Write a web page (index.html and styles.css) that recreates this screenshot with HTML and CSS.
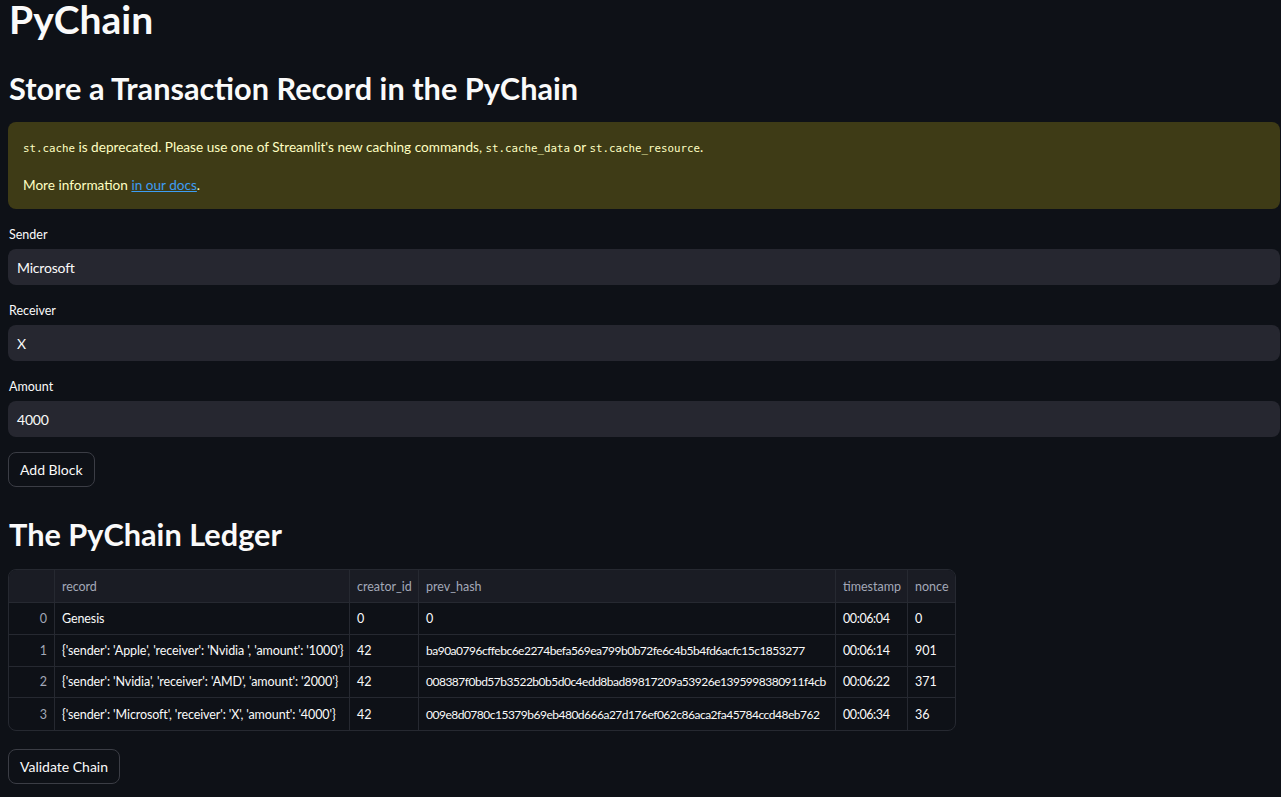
FILE: index.html
```html
<!DOCTYPE html>
<html lang="en">
<head>
<meta charset="utf-8">
<title>PyChain</title>
<link rel="stylesheet" href="styles.css">
</head>
<body>
<main class="main">
  <h1 class="title">PyChain</h1>
  <h2 class="header">Store a Transaction Record in the PyChain</h2>
  <div class="alert">
    <p><code>st.cache</code> is deprecated. Please use one of Streamlit's new caching commands, <code>st.cache_data</code> or <code>st.cache_resource</code>.</p>
    <p>More information <a href="#">in our docs</a>.</p>
  </div>
  <div class="field">
    <label class="label">Sender</label>
    <div class="input">Microsoft</div>
  </div>
  <div class="field">
    <label class="label">Receiver</label>
    <div class="input">X</div>
  </div>
  <div class="field">
    <label class="label">Amount</label>
    <div class="input">4000</div>
  </div>
  <button class="btn">Add Block</button>
  <h2 class="header ledger">The PyChain Ledger</h2>
  <div class="grid">
    <div class="row head">
      <div class="c idx"></div><div class="c rec">record</div><div class="c cid">creator_id</div><div class="c ph">prev_hash</div><div class="c ts">timestamp</div><div class="c no">nonce</div>
    </div>
    <div class="row">
      <div class="c idx">0</div><div class="c rec">Genesis</div><div class="c cid">0</div><div class="c ph">0</div><div class="c ts">00:06:04</div><div class="c no">0</div>
    </div>
    <div class="row">
      <div class="c idx">1</div><div class="c rec">{'sender': 'Apple', 'receiver': 'Nvidia ', 'amount': '1000'}</div><div class="c cid">42</div><div class="c ph hash">ba90a0796cffebc6e2274befa569ea799b0b72fe6c4b5b4fd6acfc15c1853277</div><div class="c ts">00:06:14</div><div class="c no">901</div>
    </div>
    <div class="row">
      <div class="c idx">2</div><div class="c rec">{'sender': 'Nvidia', 'receiver': 'AMD', 'amount': '2000'}</div><div class="c cid">42</div><div class="c ph hash">008387f0bd57b3522b0b5d0c4edd8bad89817209a53926e1395998380911f4cb</div><div class="c ts">00:06:22</div><div class="c no">371</div>
    </div>
    <div class="row last">
      <div class="c idx">3</div><div class="c rec">{'sender': 'Microsoft', 'receiver': 'X', 'amount': '4000'}</div><div class="c cid">42</div><div class="c ph hash">009e8d0780c15379b69eb480d666a27d176ef062c86aca2fa45784ccd48eb762</div><div class="c ts">00:06:34</div><div class="c no">36</div>
    </div>
  </div>
  <button class="btn validate">Validate Chain</button>
</main>
</body>
</html>
```

FILE: styles.css
```css
* { box-sizing: border-box; }
html, body { margin: 0; padding: 0; background: #0e1117; }
body {
  font-family: "Lato", "Noto Sans", sans-serif;
  color: #fafafa;
  width: 1281px;
  height: 797px;
  overflow: hidden;
}
.main {
  padding: 0 1px 0 8px;
  display: flex;
  flex-direction: column;
  align-items: flex-start;
}
.title {
  margin: 0 0 0 1px;
  font-size: 39px;
  font-weight: 700;
  line-height: 38px;
}
.header {
  margin: 31px 0 0 1px;
  font-size: 30.7px;
  font-weight: 700;
  line-height: 40px;
}
.alert {
  margin-top: 13px;
  width: 100%;
  background: #3e3b16;
  border-radius: 8px;
  padding: 13px 15px 12px;
  color: #ffffc2;
  font-size: 13.6px;
}
.alert p { margin: 0; line-height: 24px; }
.alert p + p { margin-top: 12px; }
.alert code {
  font-family: "DejaVu Sans Mono", monospace;
  font-size: 10.8px;
  color: #ffffc2;
}
.alert a { color: #3d9df3; }
.field { width: 100%; margin-top: 17px; display: flex; flex-direction: column; }
.field + .field { margin-top: 17px; }
.label {
  font-size: 12.5px;
  line-height: 18px;
  margin: 0 0 5px 1px;
}
.input {
  height: 36px;
  background: #262730;
  border-radius: 8px;
  padding: 0 9px;
  display: flex;
  align-items: center;
  font-size: 14px;
  letter-spacing: -0.2px;
}
.btn {
  margin-top: 15px;
  height: 35px;
  padding: 0 11px;
  background: #0e1117;
  border: 1px solid #3b3d45;
  border-radius: 8px;
  color: #fafafa;
  font-family: inherit;
  font-size: 14px;
}
.ledger { margin-top: 28px; }
.grid {
  margin-top: 14px;
  width: 948px;
  border: 1px solid #262931;
  border-radius: 8px;
  overflow: hidden;
  font-size: 12.5px;
}
.row { display: flex; height: 31.75px; border-bottom: 1px solid #262931; }
.row.last { border-bottom: none; }
.row.head { height: 33px; background: #1a1c24; color: #a3a8b8; }
.c {
  display: flex;
  align-items: center;
  padding: 0 7px;
  border-right: 1px solid #262931;
  white-space: nowrap;
  overflow: hidden;
}
.c:last-child { border-right: none; }
.idx { width: 46px; justify-content: flex-end; color: #a3a8b8; }
.rec { width: 295px; letter-spacing: -0.1px; }
.cid { width: 69px; }
.ph { width: 417px; }
.hash { font-size: 12px; letter-spacing: -0.5px; }
.ts { width: 72px; }
.row:not(.head) .ts { letter-spacing: -0.4px; }
.no { flex: 1; }
.validate { margin-top: 18px; }
```
